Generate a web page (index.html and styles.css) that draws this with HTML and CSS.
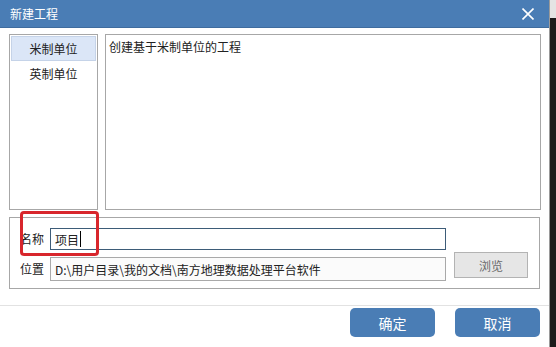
FILE: index.html
```html
<!DOCTYPE html>
<html lang="zh-CN">
<head>
<meta charset="utf-8">
<title>新建工程</title>
<link rel="stylesheet" href="styles.css">
</head>
<body>
<div class="screen">
  <div class="dialog">
    <div class="titlebar">
      <span class="title">新建工程</span>
      <svg class="close" width="12" height="12" viewBox="0 0 12 12"><path d="M0.5 0.5 L11.5 11.5 M11.5 0.5 L0.5 11.5" stroke="#fff" stroke-width="1.6" fill="none"/></svg>
    </div>
    <div class="main">
      <div class="top">
        <ul class="units">
          <li class="unit selected">米制单位</li>
          <li class="unit">英制单位</li>
        </ul>
        <div class="desc">创建基于米制单位的工程</div>
      </div>
      <div class="group">
        <span class="lbl">名称</span>
        <div class="input focused">项目<span class="caret"></span></div>
        <span class="spacer"></span>
        <span class="lbl">位置</span>
        <div class="input path">D:\用户目录\我的文档\南方地理数据处理平台软件</div>
        <button class="browse">浏览</button>
        <div class="mark"></div>
      </div>
    </div>
    <div class="footer">
      <button class="btn">确定</button>
      <button class="btn">取消</button>
    </div>
  </div>
  <div class="edge"></div>
</div>
</body>
</html>
```

FILE: styles.css
```css
* { box-sizing: border-box; }
html, body { margin: 0; padding: 0; }
body {
  width: 556px;
  height: 347px;
  overflow: hidden;
  font-family: "Noto Sans CJK SC", "Microsoft YaHei", sans-serif;
  font-size: 12px;
  color: #222;
}
.screen { display: flex; height: 347px; }
.dialog {
  width: 549px;
  height: 347px;
  background: #fff;
  display: flex;
  flex-direction: column;
}
.edge {
  width: 7px;
  height: 347px;
  background: linear-gradient(to bottom, #e4e4e4 0, #e4e4e4 18px, #1b1b1b 18px);
  border-left: 1px solid #9a9a9a;
}
.titlebar {
  height: 28px;
  background: #4a7db5;
  color: #fff;
  display: flex;
  align-items: center;
  justify-content: space-between;
  padding: 0 15px 0 10px;
  border-bottom: 1px solid #3f6c9e;
}
.title { font-size: 12px; line-height: 1; }
.main { padding: 6px 0 0 9px; }
.top { display: flex; gap: 7px; height: 176px; }
.units {
  list-style: none;
  margin: 0;
  padding: 1px;
  width: 89px;
  border: 1px solid #a7a7a7;
}
.unit {
  height: 25px;
  line-height: 25px;
  text-align: center;
  margin-bottom: 0;
}
.unit.selected {
  background: #dbe6f7;
  border: 1px solid #c5d3e8;
  line-height: 23px;
}
.desc {
  width: 436px;
  border: 1px solid #a7a7a7;
  padding: 3px 3px;
  line-height: 18px;
}
.group {
  position: relative;
  margin-top: 7px;
  width: 531px;
  height: 72px;
  border: 1px solid #a7a7a7;
  padding: 10px 0 0 10px;
  display: grid;
  grid-template-columns: 24px 396px 74px;
  grid-template-rows: 22px 24px;
  column-gap: 6px;
  row-gap: 7px;
  align-items: center;
}
.lbl { font-size: 12px; line-height: 1; }
.input {
  height: 100%;
  border: 1px solid #a9a9a9;
  padding: 0 4px;
  display: flex;
  align-items: center;
  white-space: nowrap;
  font-size: 12px;
}
.input.focused { border-color: #3d5c78; }
.input.path { background: #fbfbfb; }
.caret {
  display: inline-block;
  width: 1px;
  height: 16px;
  background: #000;
  margin-left: 1px;
}
.browse {
  align-self: start;
  margin: -5px 0 0 2px;
  height: 26px;
  width: 74px;
  background: #e6e6e6;
  border: 1px solid #b3b3b3;
  color: #6a6a6a;
  font-family: inherit;
  font-size: 12px;
  padding: 0;
}
.mark {
  position: absolute;
  left: 10px;
  top: -7px;
  width: 79px;
  height: 45px;
  border: 3px solid #d8262c;
  border-radius: 4px;
}
.footer {
  margin-top: 16px;
  border-top: 1px solid #e2e2e2;
  padding: 2px 9px 0 0;
  display: flex;
  justify-content: flex-end;
  gap: 20px;
}
.btn {
  width: 85px;
  height: 29px;
  background: #4a7db5;
  border: none;
  border-radius: 5px;
  color: #fff;
  font-family: inherit;
  font-size: 14px;
  padding: 0;
}
```
